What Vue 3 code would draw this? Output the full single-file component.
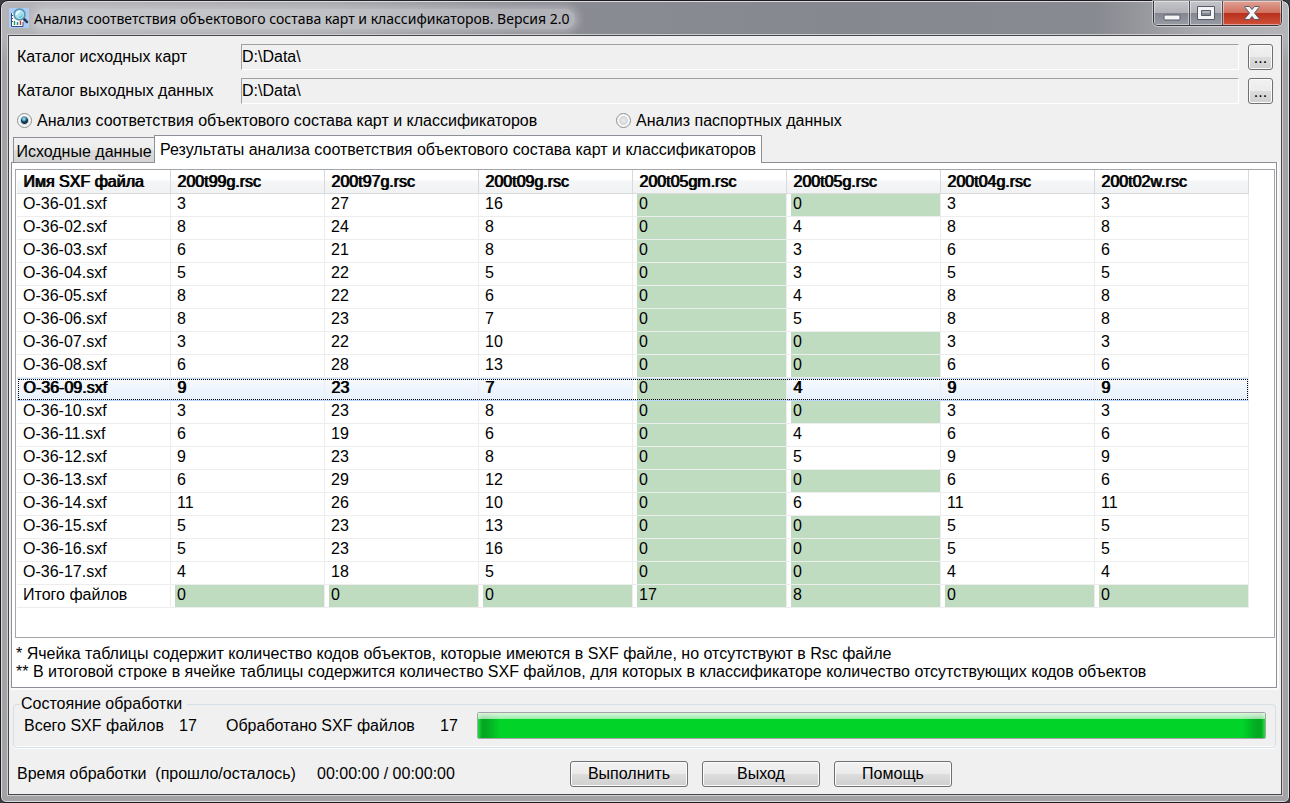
<script setup>
import { ref } from 'vue'

const inputDir = ref('D:\\Data\\')
const outputDir = ref('D:\\Data\\')
const mode = ref('objects')

const columns = ['Имя SXF файла', '200t99g.rsc', '200t97g.rsc', '200t09g.rsc', '200t05gm.rsc', '200t05g.rsc', '200t04g.rsc', '200t02w.rsc']
const counts = [
  [3, 27, 16, 0, 0, 3, 3],
  [8, 24, 8, 0, 4, 8, 8],
  [6, 21, 8, 0, 3, 6, 6],
  [5, 22, 5, 0, 3, 5, 5],
  [8, 22, 6, 0, 4, 8, 8],
  [8, 23, 7, 0, 5, 8, 8],
  [3, 22, 10, 0, 0, 3, 3],
  [6, 28, 13, 0, 0, 6, 6],
  [9, 23, 7, 0, 4, 9, 9],
  [3, 23, 8, 0, 0, 3, 3],
  [6, 19, 6, 0, 4, 6, 6],
  [9, 23, 8, 0, 5, 9, 9],
  [6, 29, 12, 0, 0, 6, 6],
  [11, 26, 10, 0, 6, 11, 11],
  [5, 23, 13, 0, 0, 5, 5],
  [5, 23, 16, 0, 0, 5, 5],
  [4, 18, 5, 0, 0, 4, 4]
]
const rows = counts.map((values, i) => ({
  name: `O-36-${String(i + 1).padStart(2, '0')}.sxf`,
  values: values.map(v => ({ v, green: v === 0 }))
}))
rows.push({
  name: 'Итого файлов',
  values: columns.slice(1).map((_, c) => ({ v: counts.filter(r => r[c] === 0).length, green: true }))
})
const selected = ref(8)
</script>

<template>
  <div class="window">
    <header class="titlebar">
      <svg class="app-icon" width="20" height="20" viewBox="0 0 20 20" aria-hidden="true">
        <rect width="20" height="20" fill="#a9cdf6" />
        <path d="M2 5h12v14H2z" fill="#fff" />
        <path d="M2.500 5v13.500h11.500V14" fill="none" stroke="#33507c" />
        <path d="M5.500 13v4" stroke="#1f9a54" stroke-width="1.500" />
        <path d="M8.500 14v3" stroke="#1f7e9a" stroke-width="1.500" />
        <path d="M11.500 13v4" stroke="#c43c2c" stroke-width="1.500" />
        <path d="M2 7.500h2M2 10.500h2M2 13.500h2" stroke="#33507c" />
        <path d="M14.500 10.500l3.500 3.500" stroke="#27364f" stroke-width="2.500" stroke-linecap="round" />
        <circle cx="10.500" cy="6.500" r="5.500" fill="#a5e1ee" stroke="#5b8fae" stroke-width="1.500" />
        <path d="M7.500 7q0-3.500 3.500-3.500" fill="none" stroke="#fff" stroke-width="1.500" />
        <path d="M10 9.500q3 0 3.500-3" fill="none" stroke="#4cb4cf" />
      </svg>
      <h1>Анализ соответствия объектового состава карт и классификаторов. Версия 2.0</h1>
      <div class="controls">
        <button type="button" class="ctl min" aria-label="Свернуть">
          <svg width="18" height="7" viewBox="0 0 18 7"><rect x="1" y="1" width="16" height="5" rx="1" fill="#f4f4f4" stroke="#565b6b" /></svg>
        </button>
        <button type="button" class="ctl max" aria-label="Развернуть">
          <svg width="18" height="14" viewBox="0 0 18 14">
            <path d="M.500.500h17v13H.500z M4.500 4.500v5h9v-5z" fill="#f4f4f4" fill-rule="evenodd" stroke="#565b6b" />
          </svg>
        </button>
        <button type="button" class="ctl close" aria-label="Закрыть">
          <svg width="16" height="14" viewBox="0 0 16 14">
            <path d="M1 .500h4.500L8 3.500l2.500-3H15v1L10.500 7l4.500 5.500v1h-4.500L8 10.500l-2.500 3H1v-1L5.500 7 1 1.500z" fill="#f4f4f4" stroke="#565b6b" />
          </svg>
        </button>
      </div>
    </header>

    <main class="client">
      <div class="path-row">
        <label for="in-dir">Каталог исходных карт</label>
        <input id="in-dir" v-model="inputDir" type="text" readonly>
        <button type="button" class="btn browse" aria-label="Выбрать каталог исходных карт">...</button>
      </div>
      <div class="path-row">
        <label for="out-dir">Каталог выходных данных</label>
        <input id="out-dir" v-model="outputDir" type="text" readonly>
        <button type="button" class="btn browse" aria-label="Выбрать каталог выходных данных">...</button>
      </div>

      <div class="modes">
        <label class="mode first"><input v-model="mode" type="radio" name="mode" value="objects"><span>Анализ соответствия объектового состава карт и классификаторов</span></label>
        <label class="mode"><input v-model="mode" type="radio" name="mode" value="passport"><span>Анализ паспортных данных</span></label>
      </div>

      <div class="tabs" role="tablist">
        <button type="button" role="tab" class="tab" aria-selected="false">Исходные данные</button>
        <button type="button" role="tab" class="tab active" aria-selected="true">Результаты анализа соответствия объектового состава карт и классификаторов</button>
      </div>

      <section class="panel" role="tabpanel">
        <div class="grid-box">
          <table>
            <thead>
              <tr><th v-for="c in columns" :key="c" scope="col">{{ c }}</th></tr>
            </thead>
            <tbody>
              <tr v-for="(r, i) in rows" :key="r.name" :class="{ selected: i === selected }" @click="selected = i">
                <td>{{ r.name }}</td>
                <td v-for="(cell, c) in r.values" :key="c" :class="{ green: cell.green }">{{ cell.v }}</td>
              </tr>
            </tbody>
          </table>
        </div>
        <p>* Ячейка таблицы содержит количество кодов объектов, которые имеются в SXF файле, но отсутствуют в Rsc файле</p>
        <p>** В итоговой строке в ячейке таблицы содержится количество SXF файлов, для которых в классификаторе количество отсутствующих кодов объектов</p>
      </section>

      <fieldset class="status">
        <legend>Состояние обработки</legend>
        <div class="status-row">
          <span class="total">Всего SXF файлов</span><span class="num">17</span>
          <label for="done" class="done">Обработано SXF файлов</label><span class="num">17</span>
          <progress id="done" max="17" value="17"></progress>
        </div>
      </fieldset>

      <footer class="bottom">
        <span class="time-label">Время обработки&nbsp; (прошло/осталось)</span>
        <span class="time">00:00:00 / 00:00:00</span>
        <button type="button" class="btn action">Выполнить</button>
        <button type="button" class="btn action">Выход</button>
        <button type="button" class="btn action">Помощь</button>
      </footer>
    </main>
  </div>
</template>

<style>
body {
  margin: 0;
  background: #3a3d44;
}
</style>

<style scoped>
* {
  box-sizing: border-box;
}
.window {
  min-height: 100vh;
  display: flex;
  flex-direction: column;
  padding: 0 7px 7px;
  border: 1px solid #1c1a20;
  border-radius: 8px 8px 6px 6px;
  box-shadow: inset 0 0 0 1px #dcdcde;
  background:
    linear-gradient(180deg, transparent 36px, #a3a3a5 60px),
    linear-gradient(90deg, #b4b4b8 0, #a6a7ab 25%, #8b8c94 40%, #85888f 65%, #888a91 85%, #a9aaae 93%, #b4b5b9 100%);
  font: 16px/18px "Liberation Sans", Arial, sans-serif;
  color: #000;
}
button, input {
  font: inherit;
  color: inherit;
}
.titlebar {
  display: flex;
  align-items: flex-start;
  height: 34px;
}
.app-icon {
  margin: 7px 5px 0 1px;
}
h1 {
  margin: 8px 0 0;
  padding: 0 6px 0 0;
  font: 14px/20px "Noto Sans", "Open Sans", sans-serif;
  white-space: nowrap;
  background: rgba(225, 226, 230, .45);
  border-radius: 10px;
  box-shadow: 0 0 8px 3px rgba(225, 226, 230, .45);
}
.controls {
  display: flex;
  margin-left: auto;
  height: 25px;
  border: 1px solid #33343c;
  border-top: 0;
  border-radius: 0 0 5px 5px;
  box-shadow: 0 0 0 1px rgba(230, 230, 235, .6);
  overflow: hidden;
}
.ctl {
  display: flex;
  align-items: center;
  justify-content: center;
  padding: 0;
  border: 0;
  border-right: 1px solid #4b4d56;
  box-shadow: inset 0 0 0 1px rgba(255, 255, 255, .45);
  background: linear-gradient(#c5c6ca 0, #b0b1b7 50%, #83858f 50%, #9a9ca5 100%);
}
.ctl svg {
  display: block;
}
.min {
  width: 36px;
}
.min svg {
  margin-top: 8px;
}
.max {
  width: 33px;
}
.close {
  width: 58px;
  border-right: 0;
  background: linear-gradient(#dfa295 0, #d0705e 50%, #b8301c 50%, #d0503a 100%);
}
.client {
  flex: 1;
  display: flex;
  flex-direction: column;
  padding: 8px 4px 7px 2px;
  background: #f0f0f0;
  border: 1px solid #46474d;
  box-shadow: 0 0 0 1px #cfcfd2;
}
.path-row {
  display: flex;
  align-items: center;
  height: 26px;
  margin: 0 4px 8px 6px;
}
.path-row label {
  width: 224px;
}
.path-row input {
  flex: 1;
  min-width: 0;
  height: 26px;
  padding: 0;
  border: 1px solid;
  border-color: #a0a0a0 #fff #fff #a0a0a0;
  border-radius: 0;
  background: #f0f0f0;
  outline: 0;
}
.btn {
  border: 1px solid #707070;
  border-radius: 3px;
  box-shadow: inset 0 0 0 1px #fbfbfb;
  background: linear-gradient(#f2f2f2 0, #ebebeb 50%, #dddddd 50%, #cfcfcf 100%);
  padding: 0;
}
.browse {
  width: 25px;
  height: 26px;
  margin-left: 9px;
  line-height: 26px;
}
.modes {
  display: flex;
  height: 18px;
  margin: -1px 0 0 6px;
}
.mode {
  display: flex;
  align-items: center;
  height: 18px;
}
.mode.first {
  width: 599px;
}
.mode span {
  padding-top: 1px;
}
.mode input {
  appearance: none;
  width: 15px;
  height: 15px;
  margin: 0 5px 0 0;
  border: 1px solid #8e8f8f;
  border-radius: 50%;
  background: radial-gradient(circle, #e9eaec 0, #d5d8dc 4px, #f8f8f8 5px);
}
.mode input:checked {
  background: radial-gradient(circle at 6px 5px, #b9ecfa 0, #3b93b8 2px, transparent 3px), radial-gradient(circle, #123a5a 0, #16344f 3px, #c8ced3 4px, #f8f8f8 5px);
}
.tabs {
  display: flex;
  align-items: flex-end;
  padding-left: 2px;
  height: 34px;
  margin-bottom: -1px;
  position: relative;
}
.tab {
  height: 25px;
  width: 141px;
  padding: 3px 0 0;
  margin-bottom: 1px;
  border: 1px solid #8c8e98;
  border-right: 0;
  border-bottom: 0;
  background: linear-gradient(#f2f2f2 0, #ebebeb 50%, #dddddd 50%, #d2d2d2 100%);
  white-space: nowrap;
}
.tab.active {
  width: auto;
  height: 28px;
  margin: 0;
  padding: 1px 5px 0;
  border-right: 1px solid #8c8e98;
  background: #fff;
}
.panel {
  flex: 1;
  display: flex;
  flex-direction: column;
  padding: 6px 1px 6px 3px;
  background: #fff;
  border: 1px solid #8c8e98;
  box-shadow: 1px 1px 0 1px #fafafa;
}
.grid-box {
  flex: 1;
  margin-bottom: 7px;
  padding: 0 0 0 1px;
  border: 1px solid #a3a5a8;
}
table {
  table-layout: fixed;
  width: 1232px;
  border-collapse: separate;
  border-spacing: 0;
}
th, td {
  height: 23px;
  padding: 0 0 2px 6px;
  border-right: 1px solid #ededed;
  border-bottom: 1px solid #ededed;
  line-height: 18px;
  text-align: left;
  white-space: nowrap;
}
th {
  height: 24px;
  padding: 2px 0 1px 6px;
  border-color: #d9dadc;
  background: linear-gradient(#fff 0, #fff 45%, #f5f6f8 46%, #f0f2f4 100%);
  font-weight: normal;
  text-shadow: 1px 0 0 #000;
}
.green {
  background: linear-gradient(90deg, #fff 4px, #c0dcc0 4px);
  background-clip: padding-box;
}
.selected {
  outline: 1px dotted #000;
  outline-offset: -2px;
}
.selected td {
  border-bottom-color: #b8d6fb;
  box-shadow: inset 0 1px 0 #c4ddfb;
}
.selected td:not(.green) {
  background: linear-gradient(#f8fbff, #e6f0fb);
  text-shadow: 1px 0 0 #000;
}
.panel p {
  margin: 0 0 0 1px;
}
.status {
  min-width: 0;
  margin: 7px 1px 0 2px;
  padding: 0 9px 8px 10px;
  border: 1px solid #d5dfe5;
  border-radius: 4px;
  box-shadow: inset 0 -1px 0 #fff, 0 1px 0 #fff;
}
.status legend {
  margin-left: -4px;
  padding: 0 5px 0 1px;
}
.status-row {
  display: flex;
  align-items: center;
  height: 27px;
  margin-top: -1px;
}
.total {
  width: 155px;
}
.done {
  width: 214px;
}
.num {
  width: 47px;
}
.num:last-of-type {
  width: 37px;
}
progress {
  appearance: none;
  flex: 1;
  min-width: 0;
  height: 27px;
  border: 1px solid #a5a5a5;
  border-radius: 2px;
  background: #e6e6e6;
}
progress::-webkit-progress-bar {
  background: #e6e6e6;
}
progress::-webkit-progress-value {
  background:
    linear-gradient(rgba(255, 255, 255, .85) 0, rgba(255, 255, 255, .6) 6px, transparent 6px),
    linear-gradient(90deg, #20e040 0, #04a822 4px, #04a822 8px, #01d328 22px, #01d328 calc(100% - 22px), #04a822 calc(100% - 8px), #04a822 calc(100% - 4px), #20e040 100%);
}
.bottom {
  display: flex;
  align-items: center;
  height: 26px;
  margin: 13px 0 0 6px;
}
.time-label {
  width: 300px;
}
.time {
  width: 253px;
}
.action {
  width: 118px;
  height: 26px;
  margin-right: 14px;
}
</style>
